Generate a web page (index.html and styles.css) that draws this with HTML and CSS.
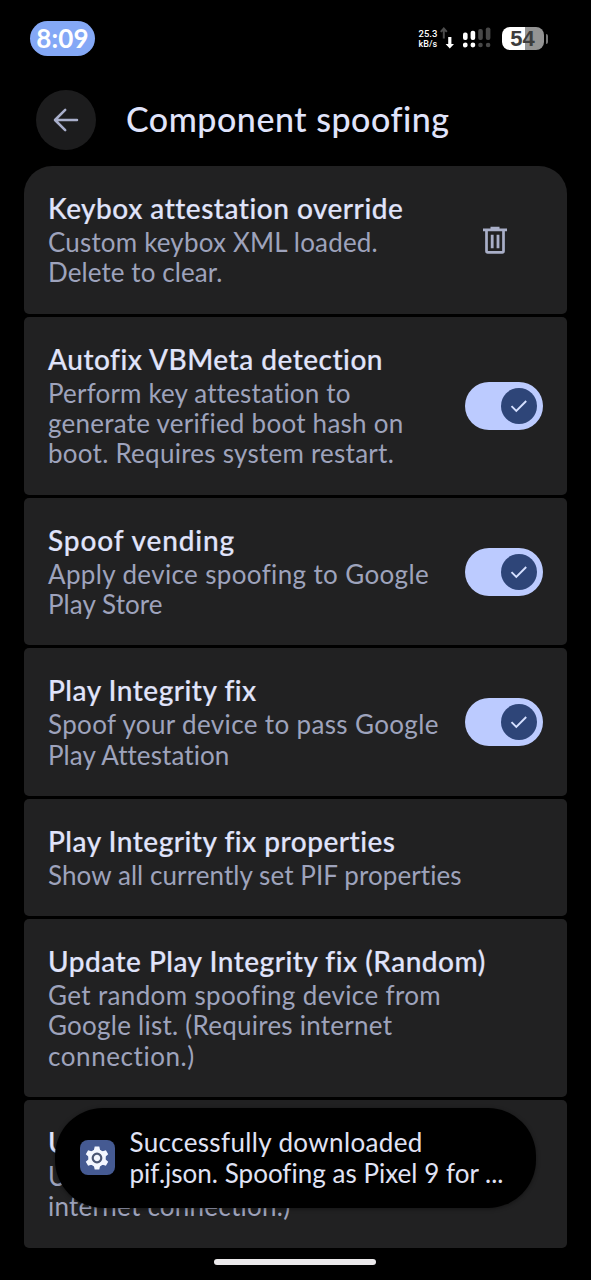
FILE: index.html
```
<!DOCTYPE html>
<html lang="en">
<head>
<meta charset="utf-8">
<title>Component spoofing</title>
<link rel="stylesheet" href="styles.css">
</head>
<body>
<svg class="defs" width="0" height="0">
  <symbol id="check" viewBox="0 0 18 14"><path d="M1.5 7.2 6.3 12 16.2 2" fill="none" stroke="#d5e0ff" stroke-width="1.9"/></symbol>
</svg>
<div class="screen">
  <div class="status">
    <div class="clock">8:09</div>
    <div class="tray">
      <div class="speed"><span>25.3</span><span>kB/s</span></div>
      <svg class="arrows" width="14" height="22" viewBox="0 0 14 22">
        <path d="M3.8 11.5V2M.8 4.8 3.8 1.5l3 3.3" fill="none" stroke="#4c4c4c" stroke-width="2"/>
        <path d="M8.2 10h3.2v7H14l-4.2 4.5L5.6 17h2.6z" fill="#fff"/>
      </svg>
      <svg class="signal" width="28" height="22" viewBox="0 0 28 22">
        <g fill="#fff"><rect x="0" y="5.5" width="4.6" height="7.5" rx="2"/><rect x="7.6" y="3.7" width="4.6" height="9.3" rx="2"/><circle cx="2.3" cy="18" r="2.4"/><circle cx="9.9" cy="18" r="2.4"/></g>
        <g fill="#484848"><rect x="15.2" y="2" width="4.6" height="11" rx="2"/><rect x="22.8" y="0.5" width="4.6" height="12.5" rx="2"/><circle cx="17.5" cy="18" r="2.3"/><circle cx="25.1" cy="18" r="2.3"/></g>
      </svg>
      <div class="battery">54</div><div class="nub"></div>
    </div>
  </div>

  <header class="header">
    <div class="back">
      <svg width="26" height="24" viewBox="0 0 26 24"><path d="M24 12H2.5M12.2 1.8 2 12l10.2 10.2" fill="none" stroke="#a9afcb" stroke-width="2.5" stroke-linecap="round" stroke-linejoin="round"/></svg>
    </div>
    <h1>Component spoofing</h1>
  </header>

  <main class="list">
    <section class="card two first">
      <div class="copy"><h2>Keybox attestation override</h2>
        <p><span class="s4">Custom keybox XML loaded.</span><span class="s3">Delete to clear.</span></p></div>
      <svg class="trash" width="26" height="28" viewBox="0 0 26 28">
        <path d="M4.5 4.5V25a1.3 1.3 0 0 0 1.3 1.3h14.4a1.3 1.3 0 0 0 1.3-1.3V4.500" fill="none" stroke="#a9afc8" stroke-width="2.7"/>
        <path d="M1 2.400h7.500V.8h9v1.600H25v2.800H1zM8.800 8.700h2.800v13.500H8.800zM14.600 8.700h2.800v13.500h-2.800z" fill="#a9afc8"/>
      </svg>
    </section>

    <section class="card three">
      <div class="copy"><h2>Autofix VBMeta detection</h2>
        <p><span class="s4">Perform key attestation to</span><span class="s5">generate verified boot hash on</span><span class="s5">boot. Requires system restart.</span></p></div>
      <div class="toggle"><i><svg width="18" height="14"><use href="#check"/></svg></i></div>
    </section>

    <section class="card two">
      <div class="copy"><h2 class="wide">Spoof vending</h2>
        <p><span class="s6">Apply device spoofing to Google</span><span class="s3">Play Store</span></p></div>
      <div class="toggle"><i><svg width="18" height="14"><use href="#check"/></svg></i></div>
    </section>

    <section class="card two">
      <div class="copy"><h2>Play Integrity fix</h2>
        <p><span class="s6">Spoof your device to pass Google</span><span class="s3">Play Attestation</span></p></div>
      <div class="toggle"><i><svg width="18" height="14"><use href="#check"/></svg></i></div>
    </section>

    <section class="card one">
      <div class="copy"><h2>Play Integrity fix properties</h2>
        <p><span class="s3">Show all currently set PIF properties</span></p></div>
    </section>

    <section class="card three">
      <div class="copy"><h2>Update Play Integrity fix (Random)</h2>
        <p><span class="s6">Get random spoofing device from</span><span class="s5">Google list. (Requires internet</span><span class="s8">connection.)</span></p></div>
    </section>

    <section class="card two">
      <div class="copy"><h2>U</h2>
        <p><span>U</span><span class="s5">internet connection.)</span></p></div>
    </section>
  </main>

  <div class="toast">
    <div class="app">
      <svg width="24" height="24" viewBox="-12 -12 24 24">
        <g fill="#f3f6ff"><circle r="8.800"/>
          <g id="tooth"><path d="M-3.200-7.500-2.300-11.600h4.600L3.200-7.500zM-3.200 7.500-2.300 11.600h4.600L3.200 7.500z"/></g>
          <use href="#tooth" transform="rotate(60)"/><use href="#tooth" transform="rotate(120)"/></g>
        <circle r="4.300" fill="#f3f6ff" stroke="#4b5674" stroke-width="2.200"/>
      </svg>
    </div>
    <p><span class="s6">Successfully downloaded</span><span class="s2">pif.json. Spoofing as Pixel 9 for ...</span></p>
  </div>
  <div class="home"></div>
</div>
</body>
</html>
```
FILE: styles.css
```
* { box-sizing: border-box; margin: 0; padding: 0; }
body { background: #000; font-family: Lato, "Open Sans", sans-serif; color: #e0e4fb; }
.defs { display: block; position: absolute; }
.screen { position: relative; width: 591px; height: 1280px; overflow: hidden; background: #000; }

.status { display: flex; justify-content: space-between; align-items: flex-start; height: 90px; padding: 21px 43px 0 30px; }
.clock { width: 65px; height: 35px; border-radius: 18px; background: #84a8f6; color: #fff; font: 700 26px/34px Lato, sans-serif; letter-spacing: .2px; text-align: center; }
.tray { display: flex; align-items: center; height: 35px; }
.speed { display: flex; flex-direction: column; width: 22px; color: #fff; font: 500 9.500px/11px Roboto, sans-serif; }
.speed span { white-space: nowrap; }
.speed span:last-child { font-size: 9px; }
.arrows { margin: -1px 9px 0 -1px; }
.signal { margin: -1px 11px 0 0; }
.battery { width: 42px; height: 23px; margin-top: -1px; border-radius: 8px; background: linear-gradient(90deg, #fff 55%, #949494 55%); color: #3d3d3d; font: 700 22px/24px "Liberation Sans", sans-serif; text-align: center; }
.nub { width: 2.500px; height: 10px; margin-left: 2px; border-radius: 0 2px 2px 0; background: #777; }

.header { display: flex; align-items: center; gap: 30px; height: 60px; padding-left: 36px; }
.back { display: flex; align-items: center; justify-content: center; width: 60px; height: 60px; border-radius: 50%; background: #1c1c1d; }
h1 { padding-bottom: 3px; font-size: 34px; font-weight: 500; line-height: 57px; letter-spacing: .520px; }

.list { display: flex; flex-direction: column; gap: 3.100px; margin: 16.200px 24px 0; }
.card { display: flex; justify-content: space-between; align-items: center; padding: 0 24px; border-radius: 5px; background: #212122; }
.first { border-radius: 28px 28px 5px 5px; }
.one { height: 117.100px; }
.two { height: 147.500px; }
.three { height: 177.900px; }
.copy { white-space: nowrap; }
h2 { padding-bottom: 3px; font-size: 28px; font-weight: 500; line-height: 32px; letter-spacing: .500px; -webkit-text-stroke: .2px #e0e4fb; }
h2.wide { letter-spacing: .900px; }
p { color: #9ea3bc; font-size: 26px; line-height: 30.400px; }
p span { display: block; }
.s2 { letter-spacing: .02px; }
.s3 { letter-spacing: .08px; }
.s4 { letter-spacing: .17px; }
.s5 { letter-spacing: .25px; }
.s6 { letter-spacing: .36px; }
.s8 { letter-spacing: .57px; }

.trash { margin-right: 35px; }
.toggle { display: flex; justify-content: flex-end; flex: none; width: 78px; height: 48px; padding: 6px; border-radius: 24px; background: #bccbff; }
.toggle i { display: flex; align-items: center; justify-content: center; width: 36px; height: 36px; border-radius: 50%; background: #2e4578; }

.toast { position: absolute; left: 55px; top: 1108px; display: flex; align-items: center; gap: 15px; width: 481px; height: 100px; padding: 0 0 1px 24.500px; border-radius: 48px; background: #000; box-shadow: 0 1px 4px rgba(0, 0, 0, .4); white-space: nowrap; }
.toast p { color: #e0e3f5; }
.app { display: flex; align-items: center; justify-content: center; width: 35px; height: 35px; border-radius: 8px; background: #455a92; }
.home { position: absolute; left: 214px; top: 1259px; width: 162px; height: 5.500px; border-radius: 3px; background: #ebe9eb; }
```
